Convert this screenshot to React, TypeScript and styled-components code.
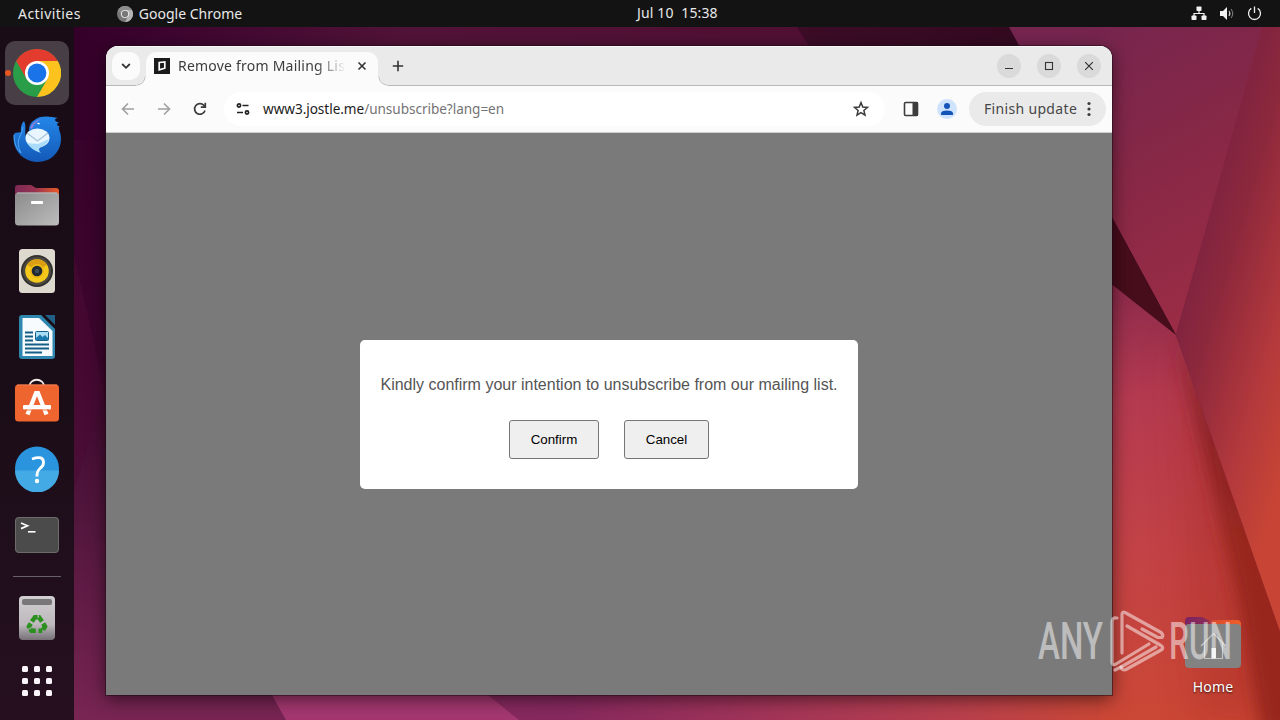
import React from "react";
import styled, { createGlobalStyle } from "styled-components";

const GlobalStyle = createGlobalStyle`
  * {
    box-sizing: border-box;
  }

  body {
    margin: 0;
    overflow: hidden;
    font-family: "Noto Sans", "Open Sans", sans-serif;
  }
`;

const Screen = styled.div`
  position: relative;
  display: flex;
  flex-direction: column;
  width: 1280px;
  height: 720px;
  overflow: hidden;
  background: #3b0a2c;
`;

const WallpaperSvg = styled.svg`
  position: absolute;
  top: 0;
  left: 0;
`;

/* Top bar */

const TopBar = styled.header`
  position: relative;
  display: grid;
  grid-template-columns: 619px auto 1fr;
  align-items: center;
  height: 27px;
  padding: 0 17px 0 18px;
  background: #131313;
  color: #e9e9e9;
`;

const TopBarGroup = styled.div<{ $end?: boolean }>`
  display: flex;
  align-items: center;
  justify-content: ${({ $end }) => ($end ? "flex-end" : "flex-start")};
  gap: ${({ $end }) => ($end ? "12px" : "0")};
`;

const Label = styled.span<{ $size?: number; $tracking?: number }>`
  font-size: ${({ $size }) => $size ?? 14}px;
  letter-spacing: ${({ $tracking }) => $tracking ?? 0}px;
  line-height: 20px;
  white-space: pre;
`;

const Clock = styled(Label)`
  padding-bottom: 2px;
`;

const AppMenu = styled.div`
  display: flex;
  align-items: center;
  gap: 6px;
  margin-left: 36px;
`;

/* Dock */

const Workspace = styled.div`
  position: relative;
  display: flex;
  flex: 1;
`;

const DockBar = styled.nav`
  display: flex;
  flex-direction: column;
  align-items: center;
  gap: 2px;
  width: 74px;
  padding-top: 14px;
  background: linear-gradient(180deg, #190c17 0%, #1b0d18 55%, #261020 100%);
`;

const DockItem = styled.div<{ $active?: boolean }>`
  position: relative;
  display: flex;
  align-items: center;
  justify-content: center;
  width: 64px;
  height: 64px;
  border-radius: 10px;
  background: ${({ $active }) => ($active ? "#483e46" : "transparent")};

  svg {
    display: block;
  }
`;

const RunningDot = styled.span`
  position: absolute;
  left: 0;
  top: 29px;
  width: 6px;
  height: 6px;
  border-radius: 50%;
  background: #e95420;
`;

const DockDivider = styled.div`
  width: 48px;
  height: 1px;
  margin: 7px 0;
  background: #6a6069;
`;

const AppGrid = styled.div`
  display: grid;
  grid-template-columns: repeat(3, 6px);
  gap: 6px;
  margin-top: 14px;
`;

const AppGridDot = styled.span`
  height: 6px;
  border-radius: 1.5px;
  background: #fbf4fa;
`;

/* Browser window */

const Desktop = styled.main`
  flex: 1;
  padding: 19px 0 0 32px;
`;

const BrowserWindow = styled.section`
  display: flex;
  flex-direction: column;
  width: 1006px;
  height: 649px;
  border-radius: 12px 12px 0 0;
  overflow: hidden;
  background: #fbfbfb;
  box-shadow: 0 0 0 1px rgba(30, 10, 20, 0.5), 0 4px 18px rgba(0, 0, 0, 0.55);
`;

const TabStrip = styled.div`
  display: flex;
  height: 40px;
  padding: 6px 11px 0 6px;
  background: #eaeaea;
  box-shadow: inset 0 -1px #b9b9b9, inset 0 1px #f8f8f8;
`;

const TabSearch = styled.div`
  display: flex;
  align-items: center;
  justify-content: center;
  width: 28px;
  height: 28px;
  border-radius: 10px;
  background: #fbfbfb;
`;

const Tab = styled.div`
  position: relative;
  display: flex;
  align-items: center;
  width: 232px;
  height: 34px;
  margin-left: 6px;
  padding: 0 10px 6px 8px;
  border-radius: 10px 10px 0 0;
  background: #fbfbfb;
  color: #3c3c3c;

  &::before,
  &::after {
    content: "";
    position: absolute;
    bottom: 0;
    width: 10px;
    height: 10px;
  }

  &::before {
    left: -10px;
    background: radial-gradient(
      circle at 0 0,
      transparent 8.5px,
      #b9b9b9 9px,
      #fbfbfb 10px
    );
  }

  &::after {
    right: -10px;
    background: radial-gradient(
      circle at 100% 0,
      transparent 8.5px,
      #b9b9b9 9px,
      #fbfbfb 10px
    );
  }
`;

const TabTitle = styled.div`
  width: 168px;
  margin: 0 11px 0 8px;
  padding-bottom: 2px;
  overflow: hidden;
  mask-image: linear-gradient(90deg, #000 138px, transparent 168px);
`;

const NewTab = styled.div`
  display: flex;
  align-items: center;
  height: 28px;
  margin-left: 14px;
`;

const WindowControls = styled.div`
  display: flex;
  align-items: center;
  gap: 16px;
  height: 28px;
  margin-left: auto;
`;

const WindowButton = styled.div`
  display: flex;
  align-items: center;
  justify-content: center;
  width: 24px;
  height: 24px;
  border-radius: 50%;
  background: #dadada;
`;

const Toolbar = styled.div`
  display: flex;
  align-items: center;
  height: 47px;
  padding: 0 6px 0 14px;
  border-bottom: 1px solid #cfcfcf;
  background: #fbfbfb;
`;

const NavButtons = styled.div`
  display: flex;
  gap: 20px;
  margin-right: 16px;
`;

const AddressBar = styled.div`
  display: flex;
  align-items: center;
  width: 661px;
  height: 34px;
  padding: 0 15px 0 11px;
  border-radius: 17px;
  background: #fff;

  svg:last-child {
    margin-left: auto;
  }
`;

const Url = styled.div`
  margin-left: 12px;
  padding-bottom: 2px;
  color: #747474;
  font-size: 13.6px;
  letter-spacing: -0.05px;
  white-space: nowrap;

  strong {
    color: #1c1c1c;
    font-weight: 400;
  }
`;

const ToolbarActions = styled.div`
  display: flex;
  align-items: center;
  gap: 18px;
  margin: 0 12px 0 18px;
`;

const Avatar = styled.div`
  display: flex;
  align-items: center;
  justify-content: center;
  width: 20px;
  height: 20px;
  border-radius: 50%;
  background: #cfe3fd;
`;

const UpdateButton = styled.div`
  display: flex;
  align-items: center;
  justify-content: space-between;
  width: 137px;
  height: 34px;
  padding: 0 15px;
  border-radius: 17px;
  background: #eaeaea;
  color: #474747;
`;

/* Page */

const Page = styled.div`
  display: flex;
  align-items: center;
  justify-content: center;
  flex: 1;
  background: #7a7a7a;
`;

const Dialog = styled.div`
  width: 498px;
  height: 149px;
  padding: 35px 20px 30px;
  border-radius: 5px;
  background: #fff;
  text-align: center;
  font-family: "Liberation Sans", Arial, sans-serif;
`;

const Message = styled.p`
  margin: 0 0 26px;
  color: #555;
  font-size: 16px;
  line-height: 19px;
  white-space: nowrap;
`;

const Actions = styled.div`
  display: flex;
  justify-content: center;
  gap: 25px;
`;

const ActionButton = styled.button<{ $width: number }>`
  width: ${({ $width }) => $width}px;
  height: 39px;
  padding: 0;
  border: 1px solid #767676;
  border-radius: 3px;
  background: #efefef;
  color: #000;
  font-family: inherit;
  font-size: 13.333px;
`;

/* Desktop overlays */

const HomeShortcut = styled.div`
  position: absolute;
  left: 1179px;
  top: 613px;
  display: flex;
  flex-direction: column;
  align-items: center;
  gap: 8px;
  width: 68px;
  color: #fff;
  text-shadow: 0 1px 2px rgba(0, 0, 0, 0.7);
`;

const Watermark = styled.svg`
  position: absolute;
  left: 1030px;
  top: 600px;
`;

const Wallpaper = () => (
  <WallpaperSvg width="1280" height="720" viewBox="0 0 1280 720">
    <defs>
      <linearGradient id="left" x1="0" y1="0" x2="0" y2="1">
        <stop offset="0" stopColor="#34002a" />
        <stop offset="0.5" stopColor="#3d062d" />
        <stop offset="0.72" stopColor="#52163d" />
        <stop offset="1" stopColor="#782553" />
      </linearGradient>
      <linearGradient id="top" x1="74" y1="0" x2="1010" y2="0" gradientUnits="userSpaceOnUse">
        <stop offset="0" stopColor="#34002a" />
        <stop offset="0.1" stopColor="#3d0530" />
        <stop offset="0.35" stopColor="#521338" />
        <stop offset="0.78" stopColor="#501034" />
        <stop offset="1" stopColor="#3b0b24" />
      </linearGradient>
      <linearGradient id="bottom" x1="280" y1="0" x2="1180" y2="0" gradientUnits="userSpaceOnUse">
        <stop offset="0" stopColor="#84285c" />
        <stop offset="0.32" stopColor="#87295e" />
        <stop offset="0.55" stopColor="#a33558" />
        <stop offset="0.76" stopColor="#b9404c" />
        <stop offset="0.9" stopColor="#c74638" />
        <stop offset="1" stopColor="#c84334" />
      </linearGradient>
      <linearGradient id="upper" x1="1080" y1="30" x2="1230" y2="300" gradientUnits="userSpaceOnUse">
        <stop offset="0" stopColor="#76254f" />
        <stop offset="0.5" stopColor="#872846" />
        <stop offset="1" stopColor="#9b2c45" />
      </linearGradient>
      <linearGradient id="side" x1="1176" y1="335" x2="1314" y2="376" gradientUnits="userSpaceOnUse">
        <stop offset="0" stopColor="#822440" />
        <stop offset="0.2" stopColor="#8c283c" />
        <stop offset="0.65" stopColor="#b3393c" />
        <stop offset="1" stopColor="#c84535" />
      </linearGradient>
      <linearGradient id="lower" x1="1130" y1="290" x2="1150" y2="720" gradientUnits="userSpaceOnUse">
        <stop offset="0" stopColor="#8e2b4b" />
        <stop offset="0.25" stopColor="#b43a50" />
        <stop offset="0.6" stopColor="#c24246" />
        <stop offset="1" stopColor="#cb4735" />
      </linearGradient>
      <linearGradient id="ridge" x1="0" y1="335" x2="0" y2="540" gradientUnits="userSpaceOnUse">
        <stop offset="0" stopColor="#7f1f2a" />
        <stop offset="1" stopColor="#98261f" />
      </linearGradient>
      <filter id="soft" x="-50%" y="-10%" width="200%" height="120%">
        <feGaussianBlur stdDeviation="8" />
      </filter>
      <filter id="softer" x="-50%" y="-20%" width="200%" height="140%">
        <feGaussianBlur stdDeviation="18" />
      </filter>
      <clipPath id="lowerClip">
        <path d="M1100 280L1176 335L1280 632V720H1100Z" />
      </clipPath>
    </defs>
    <rect width="300" height="720" fill="url(#left)" />
    <path d="M74 255Q92 330 104 392L74 490Z" fill="#4b0b34" opacity="0.55" />
    <path d="M74 27H1280V140H74Z" fill="url(#top)" />
    <path d="M797 27H1010L1060 140H870Z" fill="#300a20" opacity="0.6" />
    <path d="M258 670H1180V720H286Z" fill="url(#bottom)" />
    <path d="M258 670L286 720H519L457 670Z" fill="#a43770" />
    <path d="M1009 27H1264L1176 335Z" fill="url(#upper)" />
    <path d="M1262 27H1280V632L1176 335Z" fill="url(#side)" />
    <path d="M1100 196L1176 335L1100 275Z" fill="#470d1b" />
    <path d="M1100 275L1176 335L1280 632V720H1100Z" fill="url(#lower)" />
    <g clipPath="url(#lowerClip)">
      <path d="M1176 335L1196 720H1320V632Z" fill="#a52b22" opacity="0.35" filter="url(#softer)" />
      <path d="M1176 335L1208 470L1238 600L1262 735H1310V632Z" fill="url(#ridge)" filter="url(#soft)" />
    </g>
  </WallpaperSvg>
);

const ChromeIcon = ({ size, mono }: { size: number; mono?: boolean }) => {
  const [red, yellow, green, blue, ring] = mono
    ? ["#8b8b8b", "#b4b4b4", "#777", "#777", "#eee"]
    : ["#e33b2e", "#fcc31e", "#2a9d48", "#1a73e8", "#fff"];

  return (
    <svg width={size} height={size} viewBox="0 0 48 48">
      <circle cx="24" cy="24" r="24" fill={green} />
      <path d="M24 24L3.2 12A24 24 0 0 1 44.8 12Z" fill={red} />
      <path d="M24 12H44.8A24 24 0 0 1 24 48L34.4 30Z" fill={yellow} />
      <path d="M3.2 12L13.6 30L24 24V12Z" fill={red} />
      <circle cx="24" cy="24" r="12" fill={ring} />
      <circle cx="24" cy="24" r="9.4" fill={blue} />
    </svg>
  );
};

const ThunderbirdIcon = () => (
  <svg width="48" height="48" viewBox="0 0 48 48">
    <defs>
      <linearGradient id="bird" x1="0" y1="0" x2="0" y2="1">
        <stop offset="0" stopColor="#2487e8" />
        <stop offset="1" stopColor="#1359b8" />
      </linearGradient>
    </defs>
    <path
      d="M11 6C8 9 7.500 13 8 17C5 18 2 17 1 19C-1 31 5 40 13 44C21 48.500 33 48 40 41.500C47 35 49 27 47.500 19C46.500 15 45 13 46.500 11C44 11 43 9 46 7C42 7 40 4 45 3C38 1.500 29 0 23 4C18 7 16 10 16 16L13 22C11 17 14 12 11 6Z"
      fill="url(#bird)"
    />
    <path d="M17 13Q20 6 28 4Q21 8 19 14Z" fill="#8f7bdc" />
    <ellipse cx="24.500" cy="23" rx="12" ry="9.500" fill="#e9f6ff" />
    <path d="M14 28Q18 35 28 38Q24 34 28 32Q34 30 36 24L25 29Z" fill="#a9dcfa" />
    <path d="M14 18L24.500 26L35 18" fill="none" stroke="#a8c3d8" strokeWidth="1.200" />
    <path d="M24 8Q26 7 27 9Q25 10 24 8Z" fill="#fff" />
    <path d="M1 20Q1 32 8 38Q3 29 7 21Q9 18 10 12" fill="none" stroke="#4ba4f3" strokeWidth="1" />
  </svg>
);

const FilesIcon = () => (
  <svg width="46" height="42" viewBox="0 0 46 42">
    <defs>
      <linearGradient id="filesBack" x1="0" y1="0" x2="1" y2="0">
        <stop offset="0" stopColor="#7d2a56" />
        <stop offset="0.45" stopColor="#963250" />
        <stop offset="1" stopColor="#ea5a28" />
      </linearGradient>
      <linearGradient id="filesFront" x1="0" y1="0" x2="1" y2="1">
        <stop offset="0" stopColor="#8b8b8b" />
        <stop offset="1" stopColor="#bdbdbd" />
      </linearGradient>
    </defs>
    <path d="M1 4Q1 1 4 1H17L22 4H42Q45 4 45 7V20H1Z" fill="url(#filesBack)" />
    <rect x="1" y="8.500" width="44" height="33" rx="3.500" fill="url(#filesFront)" />
    <path d="M3 9H43" stroke="#c4c4c4" strokeWidth="0.800" />
    <rect x="17" y="17" width="12" height="3" rx="0.800" fill="#fff" />
  </svg>
);

const SpeakerIcon = () => (
  <svg width="38" height="46" viewBox="0 0 38 46">
    <rect x="1" y="1" width="36" height="44" rx="3.500" fill="#ded9cf" />
    <circle cx="19" cy="23" r="16" fill="#32302f" />
    <circle cx="19" cy="23" r="14.200" fill="#4c4941" />
    <circle cx="19" cy="23" r="11.800" fill="#f4c91b" />
    <path d="M19 23L9 16.800A11.800 11.800 0 0 1 29 16.800Z" fill="#d99e13" />
    <circle cx="19" cy="23" r="7" fill="#edb914" />
    <circle cx="19" cy="23" r="5.300" fill="#212a33" />
    <circle cx="19" cy="23" r="2.200" fill="#3e4e5b" />
  </svg>
);

const WriterIcon = () => (
  <svg width="38" height="46" viewBox="0 0 38 46">
    <path d="M4 1H23L37 15V42Q37 45 34 45H4Q1 45 1 42V4Q1 1 4 1Z" fill="#2f86ae" />
    <path d="M4.500 4H21L34.500 17V42H4.500Z" fill="#f8fbfd" />
    <path d="M27 1H37V11Z" fill="#205f86" />
    <path
      d="M7 18.500H15M7 22.500H15M7 26.500H15M7 30.500H31M7 34.500H31M7 38.500H24"
      stroke="#155e88"
      strokeWidth="1.800"
    />
    <rect x="17.500" y="17.500" width="13" height="9" rx="1" fill="#a9dcf5" stroke="#155e88" />
    <path d="M18 26V24L22 20.500L24.500 23L27 21L30 24V26Z" fill="#1c79ad" />
  </svg>
);

const SoftwareIcon = () => (
  <svg width="46" height="50" viewBox="0 0 46 50">
    <path d="M15.500 9V8A7.200 6.200 0 0 1 30 8V9" fill="none" stroke="#f1ede6" strokeWidth="1.800" />
    <rect x="1" y="6.500" width="44" height="37" rx="3.500" fill="#ef6530" />
    <path d="M3 7H43" stroke="#f68b5d" strokeWidth="0.800" />
    <path d="M13.500 36.500L22 15H24L32.500 36.500" fill="none" stroke="#fff" strokeWidth="4.200" />
    <rect x="9" y="27" width="28" height="4.600" rx="1" fill="#fff" />
    <path d="M11 32H35" stroke="#ef6530" strokeWidth="0.900" />
  </svg>
);

const HelpIcon = () => (
  <svg width="46" height="46" viewBox="0 0 46 46">
    <circle cx="23" cy="22.500" r="22" fill="#2a95de" />
    <path d="M1 24.500A22 22 0 0 0 45 24.500Z" fill="#44aae6" />
    <path
      d="M18 13Q29.500 9 29.500 16.500Q29.500 20 26 22.500Q22.800 25 23 30.500"
      fill="none"
      stroke="#fff"
      strokeWidth="2.800"
    />
    <circle cx="23" cy="35" r="2.200" fill="#fff" />
  </svg>
);

const TerminalIcon = () => (
  <svg width="46" height="38" viewBox="0 0 46 38">
    <rect x="1" y="1" width="44" height="36" rx="4" fill="#4b4b4b" />
    <rect x="1.500" y="1.500" width="43" height="35" rx="3.500" fill="none" stroke="#6c6c6c" />
    <path d="M7 7L13.500 9.800L7 12.600" fill="none" stroke="#fff" strokeWidth="1.700" />
    <path d="M14 15.800H21.500" stroke="#fff" strokeWidth="1.600" />
  </svg>
);

const TrashIcon = () => (
  <svg width="38" height="46" viewBox="0 0 38 46">
    <defs>
      <linearGradient id="bin" x1="0" y1="0" x2="0" y2="1">
        <stop offset="0" stopColor="#d2cfd2" />
        <stop offset="0.65" stopColor="#bcb8bc" />
        <stop offset="1" stopColor="#777177" />
      </linearGradient>
    </defs>
    <rect x="1" y="1" width="36" height="44" rx="4" fill="url(#bin)" />
    <rect x="4" y="4" width="30" height="6" rx="2" fill="#7a777a" />
    <g fill="none" stroke="#2c9020" strokeWidth="4.600">
      <path d="M13.800 26.500L17 22.200H21L24 26.500" strokeDasharray="8 1.200" />
      <path d="M25.200 28.500L27 31.500L24.500 35.800H20.500" strokeDasharray="7.500 1.200" />
      <path d="M17.800 35.800H13.500L11 31.500L12.800 28.500" strokeDasharray="6.500 1.200" />
    </g>
  </svg>
);

const dockApps = [
  { name: "chrome", icon: <ChromeIcon size={48} />, active: true },
  { name: "thunderbird", icon: <ThunderbirdIcon /> },
  { name: "files", icon: <FilesIcon /> },
  { name: "rhythmbox", icon: <SpeakerIcon /> },
  { name: "writer", icon: <WriterIcon /> },
  { name: "software", icon: <SoftwareIcon /> },
  { name: "help", icon: <HelpIcon /> },
  { name: "terminal", icon: <TerminalIcon /> },
];

const Dock = () => (
  <DockBar>
    {dockApps.map(({ name, icon, active }) => (
      <DockItem key={name} $active={active}>
        {active && <RunningDot />}
        {icon}
      </DockItem>
    ))}
    <DockDivider />
    <DockItem>
      <TrashIcon />
    </DockItem>
    <AppGrid>
      {Array.from({ length: 9 }, (_, index) => (
        <AppGridDot key={index} />
      ))}
    </AppGrid>
  </DockBar>
);

const StatusIcons = () => (
  <>
    <svg width="16" height="16" viewBox="0 0 16 16" fill="#f2f2f2">
      <rect x="5.500" y="0.500" width="5" height="4.500" rx="0.800" />
      <rect x="0.500" y="9.500" width="5" height="4.500" rx="0.800" />
      <rect x="10.500" y="9.500" width="5" height="4.500" rx="0.800" />
      <path d="M8 4.500V7.500M3 10V7.500H13V10" fill="none" stroke="#f2f2f2" strokeWidth="1.200" />
    </svg>
    <svg width="16" height="16" viewBox="0 0 16 16">
      <path d="M1 5H4L8 1V14L4 10H1Z" fill="#f2f2f2" />
      <path d="M10 5Q11.800 7.500 10 10" fill="none" stroke="#d0d0d0" strokeWidth="1.100" />
      <path d="M12 3Q15.500 7.500 12 12" fill="none" stroke="#777" strokeWidth="1.100" />
    </svg>
    <svg width="16" height="16" viewBox="0 0 16 16" fill="none" stroke="#ededed" strokeWidth="1.300">
      <path d="M4.300 2.400A6 6 0 1 0 10.700 2.400M7.500 0.500V7" />
    </svg>
  </>
);

const BrowserTabs = () => (
  <TabStrip>
    <TabSearch>
      <svg width="10" height="10" viewBox="0 0 10 10" fill="none" stroke="#333" strokeWidth="1.800">
        <path d="M1.200 3L5 6.800L8.800 3" />
      </svg>
    </TabSearch>
    <Tab>
      <svg width="16" height="16" viewBox="0 0 16 16">
        <rect width="16" height="16" fill="#1b1b1b" />
        <path d="M5.200 4.500L10.800 3.900V10.200L5.200 11.800Z" fill="none" stroke="#fff" strokeWidth="1.700" />
      </svg>
      <TabTitle>
        <Label $size={14} $tracking={0.22}>
          Remove from Mailing List
        </Label>
      </TabTitle>
      <svg width="10" height="10" viewBox="0 0 10 10" stroke="#333" strokeWidth="1.600">
        <path d="M1.500 1.500L8.500 8.500M8.500 1.500L1.500 8.500" />
      </svg>
    </Tab>
    <NewTab>
      <svg width="12" height="12" viewBox="0 0 12 12" stroke="#333" strokeWidth="1.600">
        <path d="M6 0.800V11.200M0.800 6H11.200" />
      </svg>
    </NewTab>
    <WindowControls>
      <WindowButton>
        <svg width="10" height="10" viewBox="0 0 10 10" stroke="#333">
          <path d="M1 7.500H9" />
        </svg>
      </WindowButton>
      <WindowButton>
        <svg width="10" height="10" viewBox="0 0 10 10" stroke="#333" fill="none">
          <rect x="1.500" y="1.500" width="7" height="7" strokeWidth="1.100" />
        </svg>
      </WindowButton>
      <WindowButton>
        <svg width="10" height="10" viewBox="0 0 10 10" stroke="#333" strokeWidth="1.200">
          <path d="M1.200 1.200L8.800 8.800M8.800 1.200L1.200 8.800" />
        </svg>
      </WindowButton>
    </WindowControls>
  </TabStrip>
);

const BrowserToolbar = () => (
  <Toolbar>
    <NavButtons>
      <svg width="16" height="16" viewBox="0 0 16 16" fill="none" stroke="#a0a0a0" strokeWidth="1.600">
        <path d="M14 8H3M8 2.500L2.500 8L8 13.500" />
      </svg>
      <svg width="16" height="16" viewBox="0 0 16 16" fill="none" stroke="#a0a0a0" strokeWidth="1.600">
        <path d="M2 8H13M8 2.500L13.500 8L8 13.500" />
      </svg>
      <svg width="16" height="16" viewBox="0 0 16 16" fill="none" stroke="#3b3b3b" strokeWidth="1.700">
        <path d="M13 9.500A5.300 5.300 0 1 1 11.700 4.200L13 5.700" />
        <path d="M13.300 1.800V6.200H8.800" />
      </svg>
    </NavButtons>
    <AddressBar>
      <svg width="16" height="16" viewBox="0 0 16 16" fill="none" stroke="#222" strokeWidth="1.700">
        <circle cx="4" cy="4.500" r="1.600" />
        <path d="M7.500 4.500H13.500M2 11.500H8" />
        <circle cx="12" cy="11.500" r="1.600" />
      </svg>
      <Url>
        <strong>www3.jostle.me</strong>/unsubscribe?lang=en
      </Url>
      <svg width="18" height="18" viewBox="0 0 18 18" fill="none" stroke="#3c3c3c" strokeWidth="1.500">
        <path d="M9 2.600L10.800 7L15.500 7.400L11.900 10.500L13 15.100L9 12.600L5 15.100L6.100 10.500L2.500 7.400L7.200 7Z" />
      </svg>
    </AddressBar>
    <ToolbarActions>
      <svg width="16" height="16" viewBox="0 0 16 16">
        <rect x="1.500" y="1.500" width="13" height="13" rx="1" fill="none" stroke="#3c3c3c" strokeWidth="1.600" />
        <rect x="9.500" y="1" width="5.500" height="14" fill="#3c3c3c" />
      </svg>
      <Avatar>
        <svg width="12" height="12" viewBox="0 0 12 12" fill="#1454b8">
          <circle cx="6" cy="3" r="3" />
          <path d="M0 12V10.500Q0 7.500 6 7.500T12 10.500V12Z" />
        </svg>
      </Avatar>
    </ToolbarActions>
    <UpdateButton>
      <Label $size={14} $tracking={0.33}>
        Finish update
      </Label>
      <svg width="4" height="16" viewBox="0 0 4 16" fill="#3c3c3c">
        <circle cx="2" cy="2.500" r="1.600" />
        <circle cx="2" cy="8" r="1.600" />
        <circle cx="2" cy="13.500" r="1.600" />
      </svg>
    </UpdateButton>
  </Toolbar>
);

const Home = () => (
  <HomeShortcut>
    <svg width="58" height="56" viewBox="0 0 58 56">
      <defs>
        <linearGradient id="homeBack" x1="0" y1="0" x2="1" y2="0">
          <stop offset="0" stopColor="#7b2463" />
          <stop offset="0.4" stopColor="#8a2b57" />
          <stop offset="0.5" stopColor="#d94a2f" />
          <stop offset="1" stopColor="#f0602a" />
        </linearGradient>
      </defs>
      <path d="M1 8Q1 4 5 4H18L24 7H53Q57 7 57 11V24H1Z" fill="url(#homeBack)" />
      <rect x="1" y="11" width="56" height="44" rx="4" fill="#828282" />
      <path
        d="M17 33L29.500 20.500L42 33M20.500 30V45.500H38.500V30"
        fill="none"
        stroke="#c4c4c4"
        strokeWidth="1.200"
      />
      <rect x="27.500" y="35" width="4.500" height="10" fill="#eee" />
    </svg>
    <Label $size={14} $tracking={0.2}>
      Home
    </Label>
  </HomeShortcut>
);

const AnyRunMark = () => (
  <Watermark width="250" height="80" viewBox="0 0 250 80">
    <g fill="#fff" fillOpacity="0.5" fontFamily="Roboto" fontWeight="500" fontSize="52">
      <text x="8" y="59" textLength="65" lengthAdjust="spacingAndGlyphs">
        ANY
      </text>
      <text x="139" y="59" textLength="63" lengthAdjust="spacingAndGlyphs">
        RUN
      </text>
    </g>
    <g fill="none" stroke="#fff" strokeOpacity="0.5" strokeWidth="3.200" strokeLinejoin="round" strokeLinecap="round">
      <path d="M87 18Q82 17 82 22V62Q82 66 86 64L119 44" />
      <path d="M92 53V14.500Q92 11 95 12.500L131 32.500Q134 35 132 37.500H128L112 29" />
      <path d="M97 26L131 45.500Q134.500 48 131 50L96 69.500Q92 71 91 67" />
      <path d="M85 70L91 67L126 47" />
    </g>
  </Watermark>
);

export default function App() {
  return (
    <Screen>
      <GlobalStyle />
      <Wallpaper />
      <TopBar>
        <TopBarGroup>
          <Label $tracking={0.45}>Activities</Label>
          <AppMenu>
            <ChromeIcon size={16} mono />
            <Label>Google Chrome</Label>
          </AppMenu>
        </TopBarGroup>
        <Clock $tracking={0.15}>Jul 10  15:38</Clock>
        <TopBarGroup $end>
          <StatusIcons />
        </TopBarGroup>
      </TopBar>
      <Workspace>
        <Dock />
        <Desktop>
          <BrowserWindow>
            <BrowserTabs />
            <BrowserToolbar />
            <Page>
              <Dialog>
                <Message>Kindly confirm your intention to unsubscribe from our mailing list.</Message>
                <Actions>
                  <ActionButton $width={90}>Confirm</ActionButton>
                  <ActionButton $width={85}>Cancel</ActionButton>
                </Actions>
              </Dialog>
            </Page>
          </BrowserWindow>
        </Desktop>
      </Workspace>
      <Home />
      <AnyRunMark />
    </Screen>
  );
}
